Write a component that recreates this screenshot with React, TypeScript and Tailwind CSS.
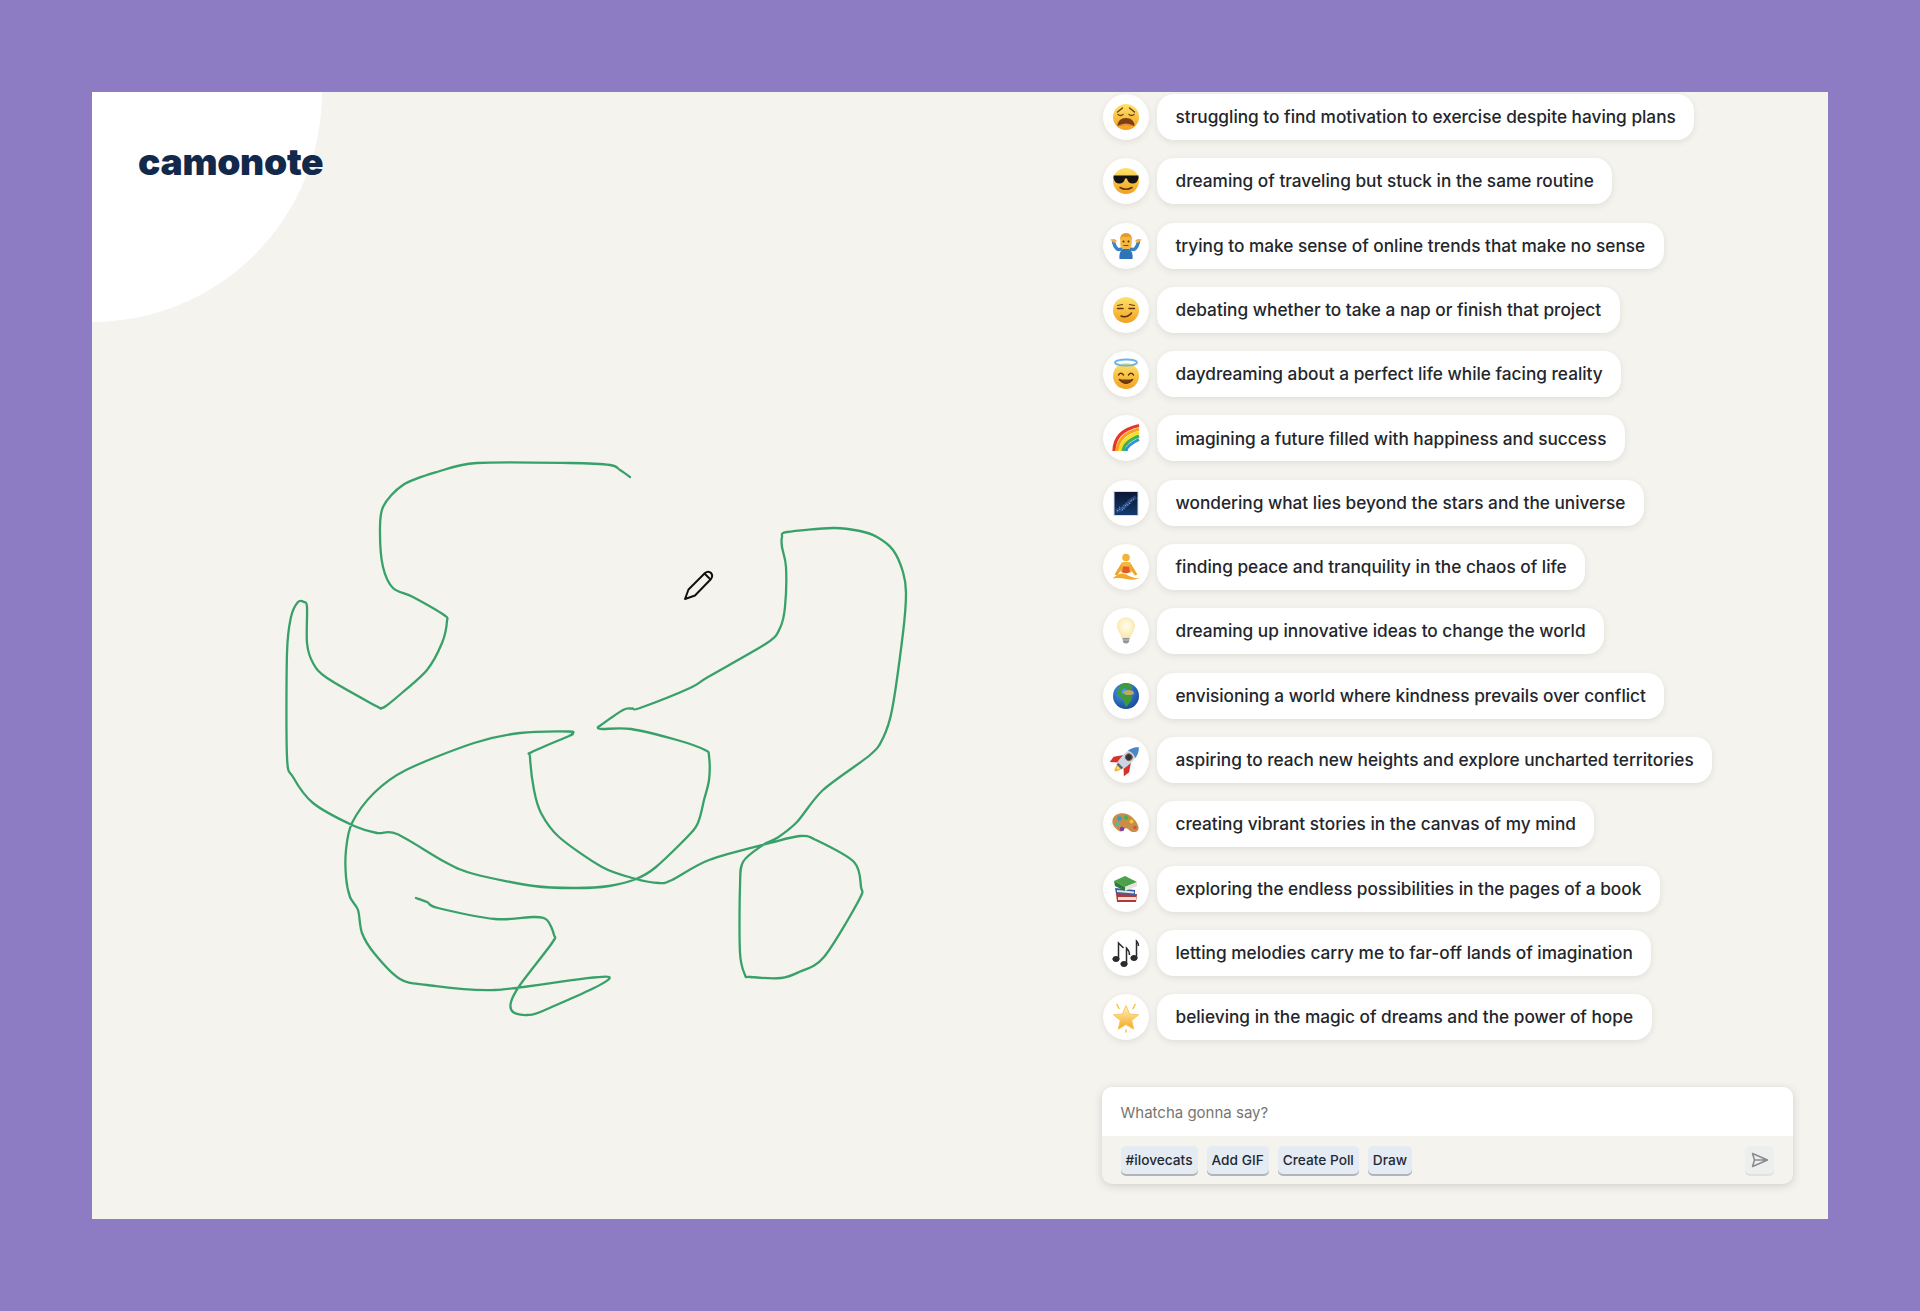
import type { ReactNode } from 'react'

type Pt = [number, number]

// hand-traced drawing, page coordinates minus the card's 92px offset
const strokePts: Pt[] = [
  [630,477],[620,470],[610,465],[570,463],[477,463],[437,472],[403,485],[383,507],[380,533],[383,567],[393,588],[413,597],[444,615],[447,621],[442,643],[427,670],[403,692],[386,706],[381,708],[376,706],[327,678],[313,663],[307,643],[307,607],[304,602],[298,602],[291,617],[287,653],[287,757],[293,777],[313,803],[352,825],[377,833],[397,834],[445,862],[474,874],[534,886],[577,888],[609,886],[636,879],[656,867],[691,833],[699,820],[704,800],[709,780],[709,756],[705,750],[677,740],[631,729],[602,729],[598,727.500],[601,725],[623,710],[632,708.500],[640,708],[690,688],[708,677],[767,643],[780,628],[785,607],[786,567],[782,547],[782,537],[787,532],[833,528],[860,531],[877,537],[893,550],[903,572],[906,593],[903,633],[892,710],[883,738],[870,755],[823,790],[797,822],[777,838],[763,845],[743,862],[740,887],[740,953],[745,975],[750,977],[781,978],[799,972],[824,957],[859,900],[861,887],[854,862],[816,840],[800,836],[770,843],[709,860],[672,880],[659,883],[636,879],[602,867],[559,837],[541,813],[534,790],[530,757],[532,752],[569,736],[572,733.500],[569,731.500],[520,733],[474,743],[406,770],[374,793],[352,823],[346,850],[346,877],[350,897],[358,910],[362,933],[374,953],[400,979],[427,985],[495,990],[609,977],[545,1010],[527,1015],[513,1012],[511,1002],[520,985],[552,943],[554,935],[547,920],[534,917],[495,919],[438,908],[427,902],[416,898],
]

function smoothPath(pts: Pt[]) {
  let d = `M${pts[0][0] - 92} ${pts[0][1] - 92}`
  for (let i = 0; i < pts.length - 1; i++) {
    const p0 = pts[Math.max(i - 1, 0)]
    const p1 = pts[i]
    const p2 = pts[i + 1]
    const p3 = pts[Math.min(i + 2, pts.length - 1)]
    const c1x = p1[0] + (p2[0] - p0[0]) / 6.5 - 92
    const c1y = p1[1] + (p2[1] - p0[1]) / 6.5 - 92
    const c2x = p2[0] - (p3[0] - p1[0]) / 6.5 - 92
    const c2y = p2[1] - (p3[1] - p1[1]) / 6.5 - 92
    d += ` C${c1x.toFixed(1)} ${c1y.toFixed(1)} ${c2x.toFixed(1)} ${c2y.toFixed(1)} ${p2[0] - 92} ${p2[1] - 92}`
  }
  return d
}

function Emoji({ children }: { children: ReactNode }) {
  return (
    <svg viewBox="0 0 32 32" className="w-8 h-8 overflow-visible">
      {children}
    </svg>
  )
}

function Face({ id, cy = 16 }: { id: string; cy?: number }) {
  return (
    <>
      <defs>
        <linearGradient id={id} x1="0" y1="0" x2="0" y2="1">
          <stop offset="0" stopColor="#fde36c" />
          <stop offset="1" stopColor="#f2a01e" />
        </linearGradient>
      </defs>
      <circle cx="16" cy={cy} r="13" fill={`url(#${id})`} />
    </>
  )
}

const emojis: ReactNode[] = [
  <Emoji>
    <Face id="f1" />
    <path d="M7.500 11l5-4M24.500 11l-5-4M8 13.500q2.500 2 5 0M19 13.500q2.500 2 5 0" stroke="#6b3c10" strokeWidth="1.300" fill="none" strokeLinecap="round" />
    <path d="M7.500 25q.5-8 8.500-8t8.500 8q-8.500-2-17 0z" fill="#7a3f14" />
    <path d="M9.500 24q6.500-3 13 0 .5 1 1 1-7.500-1.500-15 0z" fill="#f4883e" />
  </Emoji>,
  <Emoji>
    <Face id="f2" />
    <path d="M3.500 10.500h25v2.500q-1 5.500-6 5.500-4.500 0-5.500-5h-2q-1 5-5.500 5-5 0-6-5.500z" fill="#15130f" />
    <path d="M10 22.500q6 3.500 12 0" stroke="#5b3410" strokeWidth="1.500" fill="none" strokeLinecap="round" />
  </Emoji>,
  <Emoji>
    <path d="M9.500 29q-1-10 6.500-11 7.500 1 6.500 11z" fill="#2f74b8" />
    <path d="M11 19Q6 21.500 3.500 12M21 19q5 2.500 7.500-7" stroke="#3a82c4" strokeWidth="3.400" fill="none" strokeLinecap="round" />
    <path d="M0 9.500l4.500-.5 2.500 2-3 2zM32 9.500l-4.500-.5-2.500 2 3 2z" fill="#efb13c" />
    <rect x="10.300" y="4" width="11.400" height="15" rx="4.500" fill="#f5b83d" />
    <path d="M10.300 10q-.3-7 5.700-7t5.700 7q-1-3-2.500-3.500-3.200 1-6.400 0-1.500.5-2.500 3.500z" fill="#e29a2e" />
    <circle cx="13.500" cy="11.500" r="1" fill="#4a2c10" />
    <circle cx="18.500" cy="11.500" r="1" fill="#4a2c10" />
    <path d="M14 15.500h4" stroke="#7b4413" strokeWidth="1" strokeLinecap="round" />
  </Emoji>,
  <Emoji>
    <Face id="f4" />
    <path d="M7.500 11.500l5-1M19.500 10.500l5 1" stroke="#6b3c10" strokeWidth="1.200" strokeLinecap="round" />
    <path d="M7.500 14.500h5.500M19 14.500h5.500" stroke="#5b3410" strokeWidth="1.500" strokeLinecap="round" />
    <path d="M11 22q6 2.500 10.500-3" stroke="#5b3410" strokeWidth="1.500" fill="none" strokeLinecap="round" />
  </Emoji>,
  <Emoji>
    <Face id="f5" cy={18} />
    <ellipse cx="16" cy="4.500" rx="11" ry="3" fill="none" stroke="#6bb3ea" strokeWidth="1.800" />
    <path d="M8.500 17q2.500-3.500 5 0M18.500 17q2.500-3.500 5 0" stroke="#5b3410" strokeWidth="1.400" fill="none" strokeLinecap="round" />
    <path d="M9.500 21.500q6.500 7.500 13 0" stroke="#5b3410" strokeWidth="1.500" fill="#7b3e14" strokeLinecap="round" />
  </Emoji>,
  <Emoji>
    <path d="M4 29Q4 9 29 3.500" fill="none" stroke="#e8352b" strokeWidth="3.200" />
    <path d="M7 29Q8 12.500 29 7" fill="none" stroke="#f9a11b" strokeWidth="3.200" />
    <path d="M10 29Q11 16 29 10.500" fill="none" stroke="#fcdc26" strokeWidth="3.200" />
    <path d="M13 29Q14 19.500 29 14" fill="none" stroke="#3eb54a" strokeWidth="3.200" />
    <path d="M16 29Q17 23 29 17.500" fill="none" stroke="#2e8fdc" strokeWidth="3" />
  </Emoji>,
  <Emoji>
    <defs>
      <linearGradient id="sky" x1="0" y1="0" x2="0" y2="1">
        <stop offset="0" stopColor="#0a1633" />
        <stop offset="1" stopColor="#14396e" />
      </linearGradient>
    </defs>
    <rect x="3.500" y="4" width="25" height="25" fill="#d4dceb" />
    <rect x="4.500" y="5" width="23" height="23" fill="url(#sky)" />
    <path d="M6 24q6-1 10-6t10-8" stroke="#3f6fb0" strokeWidth="4" fill="none" opacity=".45" />
    <path d="M7 24l3-2 3 1 3-5 3 0 2-4 4-3" stroke="#b5cdf0" strokeWidth="1" strokeDasharray="1 1.800" fill="none" />
    <path d="M9 20l3 1 2-3 3-1 3-3 3-2" stroke="#8fb0e0" strokeWidth=".8" strokeDasharray="1 2" fill="none" />
  </Emoji>,
  <Emoji>
    <circle cx="16" cy="6.500" r="3.800" fill="#f3b33a" />
    <path d="M11.500 11.500q4.500-1.500 9 0l1 10h-11z" fill="#f5b83d" />
    <path d="M11.500 12L4.500 23.500l2.500 1 5.500-7zM20.500 12l7 11.500-2.500 1-5.500-7z" fill="#efa52f" />
    <path d="M13 15.500h6l1 5.500q-4 2.500-8 0z" fill="#e2592e" />
    <path d="M2.500 27.500q7.500-7.500 13.500-4t13.500 4q-6 2-13.500 .5t-13.500-.5z" fill="#f2aa2c" />
  </Emoji>,
  <Emoji>
    <defs>
      <radialGradient id="bulb" cx=".5" cy=".4" r=".6">
        <stop offset="0" stopColor="#fffdf0" />
        <stop offset="1" stopColor="#fbe9a8" />
      </radialGradient>
    </defs>
    <path d="M16 3c-5.500 0-8.500 4-8.500 8 0 5 4 7 4.500 12h8c.5-5 4.500-7 4.500-12 0-4-3-8-8.500-8z" fill="url(#bulb)" stroke="#f5e2a4" strokeWidth=".8" />
    <path d="M12.500 23h7l-.5 4q-3 3-6 0z" fill="#8f9299" />
    <path d="M13 25h6" stroke="#d5d6da" strokeWidth=".8" />
  </Emoji>,
  <Emoji>
    <defs>
      <radialGradient id="sea" cx=".4" cy=".35" r=".75">
        <stop offset="0" stopColor="#4aa3e8" />
        <stop offset="1" stopColor="#123f8f" />
      </radialGradient>
    </defs>
    <circle cx="16" cy="16" r="13" fill="url(#sea)" />
    <path d="M12 3.800q5-1 9 1l2 3-3 2-4-1-2-1-2 2-1 3 3 2 5 0 3 2-1 4-3 4-2 2.500-2-5-2-4-4-3-1-4z" fill="#3f9a3a" />
    <path d="M14 11l5-1 4 1 1 3-3 1-5 0-2-2z" fill="#c2a95b" />
  </Emoji>,
  <Emoji>
    <g transform="rotate(45 16 16)">
      <path d="M13 26Q16 38 19 26z" fill="#f7b52c" />
      <path d="M14.500 26Q16 32 17.500 26z" fill="#fde36c" />
      <path d="M11 14L5 22.500 6 29l6.500-6zM21 14l6 8.500-1 6.500-6.500-6z" fill="#d6322b" />
      <path d="M16-2C22 3 22.500 14 20.500 24h-9C9.500 14 10 3 16-2z" fill="#c9d5e2" />
      <path d="M16-2c3 2.500 4.700 6 5.300 10q-5.300-2.500-10.600 0C11.300 4 13 .5 16-2z" fill="#4a86c5" />
      <circle cx="16" cy="12" r="3.300" fill="#2e3542" stroke="#8a5a3a" strokeWidth="1" />
      <rect x="12.500" y="23.500" width="7" height="2.500" fill="#5d6570" />
    </g>
  </Emoji>,
  <Emoji>
    <path d="M2.500 12c1-6 9-8.500 15.500-5.500s11.500 11 10.500 14.500-5 3.500-7.500 2.500-3-4-6-3-3 4.500-6 2.500-7.500-5.500-6.500-11z" fill="#c98d4a" />
    <circle cx="9.500" cy="10.500" r="2.300" fill="#2c9fdb" />
    <circle cx="16" cy="9.500" r="2.300" fill="#4bb04a" />
    <circle cx="21.500" cy="13.500" r="2" fill="#f0c63a" />
    <circle cx="7.500" cy="16" r="2" fill="#54b8a8" />
    <circle cx="12" cy="21" r="2.300" fill="#7d3fa8" />
    <circle cx="25" cy="19.500" r="1.800" fill="#d9503a" />
  </Emoji>,
  <Emoji>
    <path d="M6 21h21l-1 8H7z" fill="#b23a34" />
    <path d="M8 24h18v3H8z" fill="#e8e3da" />
    <path d="M5 15l20 2v5l-19-1z" fill="#3a5ea8" />
    <path d="M7 17l17 1.500v2L7 19z" fill="#e8e3da" />
    <path d="M4 8l11-5 12 6-12 5z" fill="#4aa34a" />
    <path d="M4 8l11 6v4L5 13z" fill="#2e7d36" />
    <path d="M15 14l12-5v4l-12 5z" fill="#e8e3da" />
  </Emoji>,
  <Emoji>
    <g fill="#2b2b2b" stroke="#2b2b2b">
      <ellipse cx="6" cy="22" rx="3.200" ry="2.500" />
      <path d="M8.500 22V6q3 3 5 5" strokeWidth="1.500" fill="none" />
      <ellipse cx="14" cy="27" rx="3.200" ry="2.500" />
      <path d="M16.500 27V11q3 3 3 7" strokeWidth="1.500" fill="none" />
      <ellipse cx="24" cy="21" rx="3.200" ry="2.500" />
      <path d="M26.500 21V4q2 2 2 5" strokeWidth="1.500" fill="none" />
    </g>
  </Emoji>,
  <Emoji>
    <defs>
      <linearGradient id="star" x1="0" y1="0" x2="0" y2="1">
        <stop offset="0" stopColor="#fff6c4" />
        <stop offset="1" stopColor="#f5a51e" />
      </linearGradient>
    </defs>
    <path d="M16 4.500l3.500 8.500 9 .8-6.800 5.700 2.100 8.800-7.800-4.700-7.800 4.700 2.100-8.800L3.500 13.800l9-.8z" fill="url(#star)" stroke="#f7c95c" strokeWidth="1" strokeLinejoin="round" />
    <path d="M7 3.500l2 4M25 3.500l-2 4M16 29v2" stroke="#f5c24a" strokeWidth="1.500" strokeLinecap="round" />
  </Emoji>,
]

const notes = [
  'struggling to find motivation to exercise despite having plans',
  'dreaming of traveling but stuck in the same routine',
  'trying to make sense of online trends that make no sense',
  'debating whether to take a nap or finish that project',
  'daydreaming about a perfect life while facing reality',
  'imagining a future filled with happiness and success',
  'wondering what lies beyond the stars and the universe',
  'finding peace and tranquility in the chaos of life',
  'dreaming up innovative ideas to change the world',
  'envisioning a world where kindness prevails over conflict',
  'aspiring to reach new heights and explore uncharted territories',
  'creating vibrant stories in the canvas of my mind',
  'exploring the endless possibilities in the pages of a book',
  'letting melodies carry me to far-off lands of imagination',
  'believing in the magic of dreams and the power of hope',
]

const chips = ['#ilovecats', 'Add GIF', 'Create Poll', 'Draw']

export default function App() {
  return (
    <div className="h-[1311px] bg-[#8d7bc3] p-[92px] font-['Inter','Liberation_Sans',sans-serif]">
      <div className="relative h-full flex overflow-hidden bg-[#f4f3ee]">
        {/* Corner blob */}
        <div className="absolute -left-[230px] -top-[230px] w-[460px] h-[460px] rounded-full bg-white" />

        {/* Left canvas */}
        <div className="relative flex-1 pl-[46px] pt-[43px]">
          <h1 className="text-[37.200px] leading-[54px] font-black tracking-[-0.3px] text-[#13294b]">camonote</h1>
        </div>
        <svg className="absolute left-0 top-0 w-[1000px] h-[1127px]" viewBox="0 0 1000 1127" fill="none">
          <path d={smoothPath(strokePts)} stroke="#38a169" strokeWidth="2.300" strokeLinecap="round" strokeLinejoin="round" />
          {/* pencil cursor */}
          <g stroke="#111" strokeWidth="2" strokeLinejoin="round">
            <path d="M593 507l3.500-9.500 16.500-16.500c2-1.800 4.500-1.800 6 0s1.500 4 0 6L603 503.500z" fill="#f4f3ee" />
            <path d="M612.500 481.500l6 6" />
          </g>
        </svg>

        {/* Right column */}
        <div className="relative w-[727px] pr-[35px] pb-[35px] pt-[2px] flex flex-col justify-between">
          <div className="flex flex-col gap-[18.300px] pl-[2px]">
            {notes.map((note, i) => (
              <div key={note} className="flex items-center gap-[8px]">
                <div className="w-[46px] h-[46px] shrink-0 rounded-full bg-white flex items-center justify-center shadow-[0_2px_6px_rgba(60,50,30,0.1)]">
                  {emojis[i]}
                </div>
                <div className="h-[46px] px-[18.500px] flex items-center rounded-[17px] bg-white text-[17.240px] font-medium text-[#23262b] whitespace-nowrap shadow-[0_2px_6px_rgba(60,50,30,0.1)]">
                  {note}
                </div>
              </div>
            ))}
          </div>

          {/* Composer */}
          <div className="h-[97px] ml-[0.500px] rounded-[10px] overflow-hidden bg-[#f4f3ee] shadow-[0_2px_8px_rgba(60,50,30,0.18)]">
            <div className="h-[49px] bg-white px-[19px] pt-[3px] flex items-center text-[15px] text-[#77766f]">Whatcha gonna say?</div>
            <div className="h-[48px] px-[19px] flex items-center">
              <div className="flex gap-[9px]">
                {chips.map((chip) => (
                  <span key={chip} className="h-[28px] px-[5px] flex items-center rounded-[5px] bg-[#e5ebf3] text-[13.700px] font-medium text-[#1f2933] shadow-[0_2px_0_rgba(120,130,145,0.55)]">
                    {chip}
                  </span>
                ))}
              </div>
              <span className="ml-auto w-[29px] h-[28px] rounded-[5px] bg-[#edeeee] flex items-center justify-center shadow-[0_2px_0_rgba(120,130,145,0.15)]">
                <svg viewBox="0 0 18 16" className="w-[18px] h-[16px]" fill="none" stroke="#8a8a8a" strokeWidth="1.500" strokeLinejoin="round">
                  <path d="M1.500 1.500L16.500 8 1.500 14.500 3.500 8zM3.500 8h13" />
                </svg>
              </span>
            </div>
          </div>
        </div>
      </div>
    </div>
  )
}
